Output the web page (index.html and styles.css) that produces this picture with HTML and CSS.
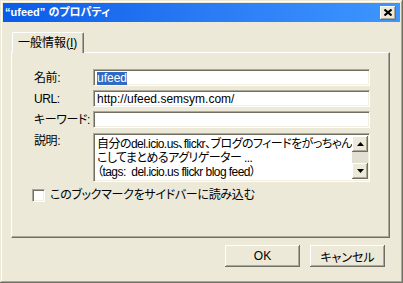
FILE: index.html
```html
<!DOCTYPE html>
<html>
<head>
<meta charset="utf-8">
<link rel="stylesheet" href="styles.css">
</head>
<body>
<div class="window">
  <div class="titlebar">
    <span class="title">“ufeed” のプロパティ</span>
    <span class="close"><svg width="8" height="7" viewBox="0 0 8 7"><path d="M0.5 0.5 L7.5 6.5 M7.5 0.5 L0.5 6.5" stroke="#000" stroke-width="2" fill="none"/></svg></span>
  </div>
  <div class="client">
    <div class="tabs"><div class="tab">一般情報(<u>I</u>)</div></div>
    <div class="panel">
      <div class="form">
        <div class="lbl">名前:</div>
        <div class="field"><span class="sel">ufeed</span></div>
        <div class="lbl">URL:</div>
        <div class="field">http://ufeed.semsym.com/</div>
        <div class="lbl">キーワード:</div>
        <div class="field"></div>
        <div class="lbl top">説明:</div>
        <div class="area">
          <div class="areatext">自分のdel.icio.us、flickr、ブログのフィードをがっちゃん<br>こしてまとめるアグリゲーター ...<br>（tags:&nbsp; del.icio.us flickr blog feed）</div>
          <div class="scroll">
            <div class="sbtn"><svg width="7" height="4" viewBox="0 0 7 4"><path d="M3.5 0 L7 4 L0 4 Z" fill="#000"/></svg></div>
            <div class="track"></div>
            <div class="sbtn"><svg width="7" height="4" viewBox="0 0 7 4"><path d="M0 0 L7 0 L3.5 4 Z" fill="#000"/></svg></div>
          </div>
        </div>
      </div>
      <div class="check"><span class="box"></span><span class="cklbl">このブックマークをサイドバーに読み込む</span></div>
    </div>
    <div class="buttons">
      <div class="btn">OK</div>
      <div class="btn">キャンセル</div>
    </div>
  </div>
</div>
</body>
</html>
```
FILE: styles.css
```css
html, body {
  margin: 0;
  padding: 0;
  background: #ECE9D8;
}
body {
  font-family: "Liberation Sans", "Noto Sans CJK JP", sans-serif;
  font-size: 12px;
  font-feature-settings: "palt";
  color: #000;
}
.window {
  width: 403px;
  height: 283px;
  box-sizing: border-box;
  padding: 3px;
  background: #ECE9D8;
  box-shadow: inset -1px -1px #716F64, inset 1px 1px #ECE9D8, inset -2px -2px #ACA899, inset 2px 2px #fff;
}
.titlebar {
  height: 19px;
  display: flex;
  align-items: center;
  justify-content: space-between;
  padding: 0 4px 0 2px;
  background: linear-gradient(to right, #0a5ce8, #2a7af4 50%, #3d96ff);
}
.title {
  color: #fff;
  font-weight: bold;
  font-size: 11px;
  line-height: 19px;
  white-space: nowrap;
}
.close {
  width: 16px;
  height: 14px;
  box-sizing: border-box;
  background: #ECE9D8;
  display: flex;
  align-items: center;
  justify-content: center;
  box-shadow: inset -1px -1px #716F64, inset 1px 1px #fff, inset -2px -2px #ACA899;
}
.client {
  padding: 10px 10px 0 8px;
}
.tabs {
  display: flex;
  padding-left: 1px;
  height: 20px;
  position: relative;
  z-index: 1;
}
.tab {
  width: 72px;
  height: 21px;
  box-sizing: border-box;
  padding: 3px 0 0 5px;
  background: #ECE9D8;
  border-top: 1px solid #fff;
  border-left: 1px solid #fff;
  border-right: 1px solid #716F64;
  border-radius: 2px 2px 0 0;
  box-shadow: inset -1px 0 #ACA899;
  line-height: 14px;
  white-space: nowrap;
}
.panel {
  height: 186px;
  box-sizing: border-box;
  border-top: 1px solid #fff;
  border-left: 1px solid #fff;
  border-right: 1px solid #716F64;
  border-bottom: 1px solid #716F64;
  box-shadow: inset -1px -1px #ACA899;
  padding: 16px 0 0 22px;
}
.form {
  display: grid;
  grid-template-columns: 59px 277px;
  grid-template-rows: 17px 17px 17px auto;
  row-gap: 4px;
  align-items: center;
}
.lbl {
  white-space: nowrap;
  line-height: 14px;
  letter-spacing: -0.4px;
}
.lbl.top {
  align-self: start;
  margin-top: 2px;
}
.field, .area {
  box-sizing: border-box;
  background: #fff;
  border-top: 1px solid #ACA899;
  border-left: 1px solid #ACA899;
  border-right: 1px solid #fff;
  border-bottom: 1px solid #fff;
  box-shadow: inset 1px 1px #716F64, inset -1px -1px #F1EFE2;
}
.field {
  height: 17px;
  padding: 1px 2px 0 3px;
  line-height: 14px;
  white-space: nowrap;
}
.sel {
  background: #316AC5;
  color: #fff;
  display: inline-block;
  line-height: 13px;
}
.area {
  height: 49px;
  align-self: start;
  margin-top: 1px;
  display: flex;
  padding: 2px 2px 2px 3px;
}
.areatext {
  flex: 1;
  white-space: nowrap;
  line-height: 14px;
  padding-top: 1px;
  overflow: hidden;
  letter-spacing: -0.55px;
}
.scroll {
  width: 16px;
  display: flex;
  flex-direction: column;
  margin-right: -1px;
}
.sbtn {
  height: 16px;
  box-sizing: border-box;
  background: #ECE9D8;
  display: flex;
  align-items: center;
  justify-content: center;
  box-shadow: inset -1px -1px #716F64, inset 1px 1px #fff, inset -2px -2px #ACA899;
}
.track {
  flex: 1;
  background: #E3E0D3;
}
.check {
  display: flex;
  align-items: center;
  gap: 5px;
  margin: 6px 0 0 -2px;
  white-space: nowrap;
  line-height: 14px;
}
.cklbl {
  letter-spacing: -0.3px;
}
.box {
  width: 13px;
  height: 13px;
  box-sizing: border-box;
  background: #fff;
  border-top: 1px solid #ACA899;
  border-left: 1px solid #ACA899;
  border-right: 1px solid #fff;
  border-bottom: 1px solid #fff;
  box-shadow: inset 1px 1px #716F64, inset -1px -1px #F1EFE2;
}
.buttons {
  display: flex;
  justify-content: flex-end;
  gap: 10px;
  margin-top: 7px;
  padding-right: 5px;
}
.btn {
  width: 75px;
  height: 22px;
  box-sizing: border-box;
  display: flex;
  align-items: center;
  justify-content: center;
  background: #ECE9D8;
  box-shadow: inset -1px -1px #716F64, inset 1px 1px #fff, inset -2px -2px #ACA899;
  white-space: nowrap;
}
```
